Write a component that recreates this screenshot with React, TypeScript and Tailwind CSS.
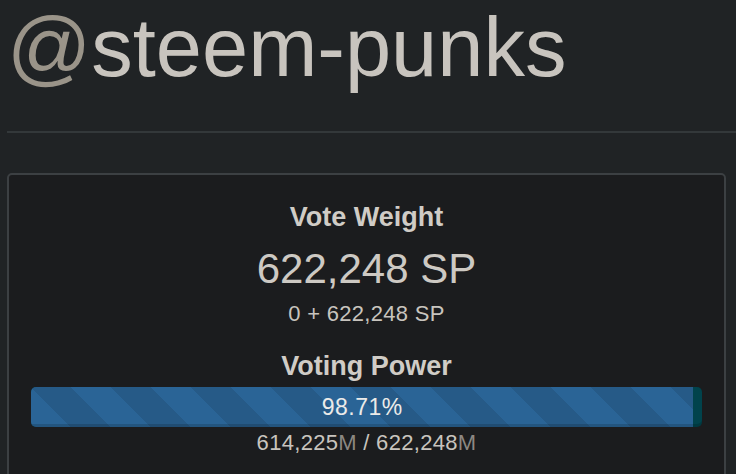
export default function App() {
    const power = 98.71;

    return (
        <div className="min-h-[474px] w-full bg-[#202325] pl-[7px] pt-[3px] font-['Liberation_Sans',Arial,sans-serif] text-[#c8c4be] overflow-hidden">
            {/* Account name */}
            <h1 className="text-[83px] leading-[90px] font-normal whitespace-nowrap">
                <span className="text-[#9a9489]">@</span>steem-punks
            </h1>
            <div className="mt-[38px] h-[2px] bg-[#33383a]" />

            {/* Vote card */}
            <section className="mt-[40px] mr-[10px] rounded-[5px] border-2 border-[#3c4043] bg-[#1b1c1e] px-[22px] pt-[27px] pb-[30px] text-center">
                <h4 className="text-[27px] leading-[30px] font-bold text-[#d0ccc6]">Vote Weight</h4>
                <p className="mt-[14px] text-[42px] leading-[46px] font-light text-[#cdc9c3]">622,248 SP</p>
                <p className="mt-[10px] text-[22px] leading-[24px] tracking-[0.3px]">0 + 622,248 SP</p>

                <h4 className="mt-[25px] text-[27px] leading-[30px] font-bold text-[#d0ccc6]">Voting Power</h4>
                <div className="mt-[6px] h-[40px] rounded-[5px] bg-[#01434c] overflow-hidden shadow-[inset_0_-3px_0_rgba(0,0,0,0.15)]">
                    <div
                        className="h-full bg-[#2a6496] bg-[linear-gradient(45deg,rgba(0,0,0,0.1)_25%,transparent_25%,transparent_50%,rgba(0,0,0,0.1)_50%,rgba(0,0,0,0.1)_75%,transparent_75%,transparent)] bg-[length:80px_80px] shadow-[inset_0_-3px_0_rgba(0,0,0,0.15)] text-[23px] leading-[40px] tracking-[0.5px] text-[#ecebe9]"
                        style={{ width: `${power}%` }}
                    >
                        98.71%
                    </div>
                </div>
                <p className="mt-[4px] text-[22px] leading-[24px] tracking-[0.3px]">
                    614,225<span className="text-[#8c8882]">M</span> / 622,248<span className="text-[#8c8882]">M</span>
                </p>
            </section>
        </div>
    );
}
